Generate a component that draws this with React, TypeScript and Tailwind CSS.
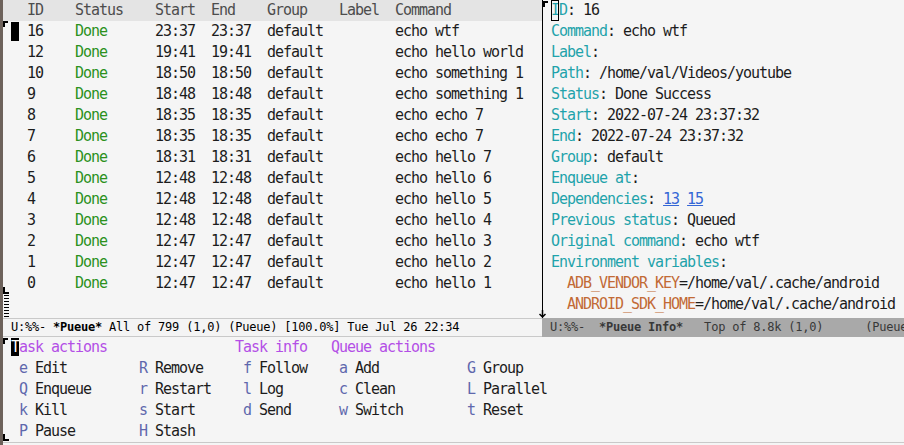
import React from 'react';

const rows = [
  ['16', '23:37', 'echo wtf'],
  ['12', '19:41', 'echo hello world'],
  ['10', '18:50', 'echo something 1'],
  ['9', '18:48', 'echo something 1'],
  ['8', '18:35', 'echo echo 7'],
  ['7', '18:35', 'echo echo 7'],
  ['6', '18:31', 'echo hello 7'],
  ['5', '12:48', 'echo hello 6'],
  ['4', '12:48', 'echo hello 5'],
  ['3', '12:48', 'echo hello 4'],
  ['2', '12:47', 'echo hello 3'],
  ['1', '12:47', 'echo hello 2'],
  ['0', '12:47', 'echo hello 1'],
];

const info: [string, string][] = [
  ['ID', '16'],
  ['Command', 'echo wtf'],
  ['Label', ''],
  ['Path', '/home/val/Videos/youtube'],
  ['Status', 'Done Success'],
  ['Start', '2022-07-24 23:37:32'],
  ['End', '2022-07-24 23:37:32'],
  ['Group', 'default'],
  ['Enqueue at', ''],
];

const env: [string, string][] = [
  ['ADB_VENDOR_KEY', '/home/val/.cache/android'],
  ['ANDROID_SDK_HOME', '/home/val/.cache/android'],
  ['ANDROID_USER_HOME', '/home/val/.local/share/android'],
];

// transient suffixes, one row per line
const actions: ([string, string] | null)[][] = [
  [['e', 'Edit'], ['R', 'Remove'], ['f', 'Follow'], ['a', 'Add'], ['G', 'Group']],
  [['Q', 'Enqueue'], ['r', 'Restart'], ['l', 'Log'], ['c', 'Clean'], ['L', 'Parallel']],
  [['k', 'Kill'], ['s', 'Start'], ['d', 'Send'], ['w', 'Switch'], ['t', 'Reset']],
  [['P', 'Pause'], ['H', 'Stash'], null, null, null],
];

const mono = "font-['DejaVu_Sans_Mono',monospace] text-[15px] tracking-[-1.03px] leading-[21px]";
const small = "font-['DejaVu_Sans_Mono',monospace] text-[12px] tracking-[-0.22px] leading-[17px]";

function Dashes({ count }: { count: number }) {
  return (
    <div className="flex flex-col gap-[2px] pl-[1px]">
      {Array.from({ length: count }).map((_, i) => (
        <div key={i} className="h-px w-[5px] bg-black" />
      ))}
    </div>
  );
}

export default function App() {
  return (
    <div className={`flex h-[445px] w-[904px] overflow-hidden bg-[#f5f5f5] text-[#1c1c1c] ${mono}`}>
      <div className="w-[3px] shrink-0 bg-[#6d625b]" />
      <div className="flex min-w-0 flex-1 flex-col">
        <div className="flex h-[318px] shrink-0">
          {/* Pueue list window */}
          <div className="flex w-[539px] shrink-0 flex-col">
            <div className="flex h-[21px] bg-[#e4e4e4] pl-[24px] text-[#4d4d4d]">
              <span className="w-[48px]">ID</span>
              <span className="w-[80px]">Status</span>
              <span className="w-[56px]">Start</span>
              <span className="w-[56px]">End</span>
              <span className="w-[72px]">Group</span>
              <span className="w-[56px]">Label</span>
              <span>Command</span>
            </div>
            <div className="flex flex-1">
              <div className="relative w-[8px] shrink-0">
                <div className="absolute left-0 top-0 h-[6px] w-[5px] border-l-2 border-t-2 border-black" />
                <div className="absolute left-0 top-[266px] h-[7px] w-[6px] border-b-2 border-l-2 border-black" />
                <div className="absolute left-0 top-[274px]">
                  <Dashes count={8} />
                </div>
              </div>
              <div className="flex flex-col">
                {rows.map(([id, t, cmd], i) => (
                  <div key={id} className="flex h-[21px] items-center whitespace-pre">
                    <span className="relative w-[16px] self-stretch">
                      {i === 0 && <span className="absolute left-0 top-[1px] h-[19px] w-[8px] bg-black" />}
                    </span>
                    <span className="w-[48px]">{id}</span>
                    <span className="w-[80px] text-[#2b911c]">Done</span>
                    <span className="w-[56px]">{t}</span>
                    <span className="w-[56px]">{t}</span>
                    <span className="w-[72px]">default</span>
                    <span className="w-[56px]" />
                    <span>{cmd}</span>
                  </div>
                ))}
              </div>
            </div>
          </div>

          {/* Pueue info window */}
          <div className="flex min-w-0 flex-1">
            <div className="relative w-[9px] shrink-0 border-l border-black">
              <div className="absolute left-0 top-[1px] h-[6px] w-[5px] border-l-2 border-t-2 border-black" />
              <svg className="absolute bottom-0 left-[-4px]" width="7" height="8" viewBox="0 0 7 8">
                <path d="M3.5 0V7M0.5 4L3.5 7L6.5 4" stroke="black" strokeWidth="1.5" fill="none" />
              </svg>
            </div>
            <div className="flex min-w-0 flex-1 flex-col overflow-hidden whitespace-pre">
              {info.map(([k, v], i) => (
                <div key={k} className="relative h-[21px] shrink-0">
                  {i === 0 && <span className="absolute left-0 top-0 h-[21px] w-[8px] border border-black" />}
                  <span className="text-[#1fa3ab]">{k}</span>:{v ? ` ${v}` : ''}
                </div>
              ))}
              <div className="h-[21px] shrink-0">
                <span className="text-[#1fa3ab]">Dependencies</span>:{' '}
                <span className="text-[#3467d6] underline">13</span>{' '}
                <span className="text-[#3467d6] underline">15</span>
              </div>
              <div className="h-[21px] shrink-0">
                <span className="text-[#1fa3ab]">Previous status</span>: Queued
              </div>
              <div className="h-[21px] shrink-0">
                <span className="text-[#1fa3ab]">Original command</span>: echo wtf
              </div>
              <div className="h-[21px] shrink-0">
                <span className="text-[#1fa3ab]">Environment variables</span>:
              </div>
              {env.map(([k, v]) => (
                <div key={k} className="h-[21px] shrink-0 pl-[16px]">
                  <span className="text-[#c26a35]">{k}</span>={v}
                </div>
              ))}
            </div>
          </div>
        </div>

        {/* mode lines */}
        <div className={`flex h-[19px] shrink-0 whitespace-pre ${small}`}>
          <div className="w-[539px] shrink-0 border-y border-[#c9c9c9] bg-[#f4f4f4] pl-[8px] text-black">
            U:%%- <span className="font-bold">*Pueue*</span> All of 799 (1,0) (Pueue) [100.0%] Tue Jul 26 22:34
          </div>
          <div className="min-w-0 flex-1 overflow-hidden bg-[#a9a9a9] pl-[8px] leading-[19px] text-[#383838]">
            {'U:%%-  '}
            <span className="font-bold">*Pueue Info*</span>
            {'   Top of 8.8k (1,0)      (Pueue)'}
          </div>
        </div>

        {/* transient popup */}
        <div className="flex h-[106px] shrink-0 border-b border-[#c9c9c9]">
          <div className="relative w-[8px] shrink-0">
            <div className="absolute left-0 top-[1px] h-[6px] w-[5px] border-l-2 border-t-2 border-black" />
            <div className="absolute bottom-[1px] left-0 h-[7px] w-[6px] border-b-2 border-l-2 border-black" />
          </div>
          <div className="flex flex-col whitespace-pre">
            <div className="grid h-[21px] grid-cols-[224px_96px_136px] text-[#b34fe6]">
              <span>
                <span className="bg-black text-white">T</span>ask actions
              </span>
              <span>Task info</span>
              <span>Queue actions</span>
            </div>
            {actions.map((row, i) => (
              <div key={i} className="grid h-[21px] grid-cols-[120px_104px_96px_128px_96px] pl-[8px]">
                {row.map((cell, j) =>
                  cell ? (
                    <span key={j}>
                      <span className="text-[#5f68ad]">{cell[0]}</span> {cell[1]}
                    </span>
                  ) : (
                    <span key={j} />
                  ),
                )}
              </div>
            ))}
          </div>
        </div>
      </div>
    </div>
  );
}
